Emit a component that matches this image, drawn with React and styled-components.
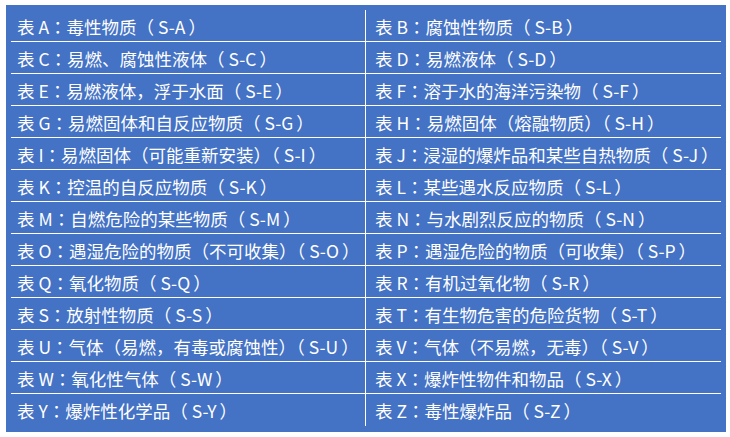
import React from "react";
import styled, { createGlobalStyle } from "styled-components";

const Global = createGlobalStyle`
  html, body { margin: 0; padding: 0; background: #ffffff; }
  body { font-family: "Noto Sans CJK SC", "Noto Sans", sans-serif; }
`;

const Panel = styled.div`
  margin: 5px 0 0 6px;
  width: 720px;
  height: 427px;
  box-sizing: border-box;
  padding: 5px 5px 0 5px;
  background: #4472c4;
`;

const Table = styled.div`
  display: grid;
  grid-template-columns: 355px 355px;
`;

const Cell = styled.div`
  display: flex;
  align-items: center;
  box-sizing: border-box;
  height: 32px;
  padding: 2px 0 0 ${(p) => (p.$right ? "9px" : "6px")};
  border-bottom: ${(p) => (p.$last ? "none" : "1px solid #ffffff")};
  border-right: ${(p) => (p.$right ? "none" : "1px solid #ffffff")};
  color: #ffffff;
  font-family: "Noto Sans CJK SC", "Noto Sans", sans-serif;
  font-size: 17.5px;
  line-height: 1;
  white-space: nowrap;
`;

const Colon = styled.span`
  font-family: "Noto Sans CJK TC", "Noto Sans", sans-serif;
`;

const Code = styled.span`
  padding: 0 3px 0 4px;
`;

const rows = [
  ["A", "毒性物质", "B", "腐蚀性物质"],
  ["C", "易燃、腐蚀性液体", "D", "易燃液体"],
  ["E", "易燃液体，浮于水面", "F", "溶于水的海洋污染物"],
  ["G", "易燃固体和自反应物质", "H", "易燃固体（熔融物质）"],
  ["I", "易燃固体（可能重新安装）", "J", "浸湿的爆炸品和某些自热物质"],
  ["K", "控温的自反应物质", "L", "某些遇水反应物质"],
  ["M", "自燃危险的某些物质", "N", "与水剧烈反应的物质"],
  ["O", "遇湿危险的物质（不可收集）", "P", "遇湿危险的物质（可收集）"],
  ["Q", "氧化物质", "R", "有机过氧化物"],
  ["S", "放射性物质", "T", "有生物危害的危险货物"],
  ["U", "气体（易燃，有毒或腐蚀性）", "V", "气体（不易燃，无毒）"],
  ["W", "氧化性气体", "X", "爆炸性物件和物品"],
  ["Y", "爆炸性化学品", "Z", "毒性爆炸品"],
];

function Entry({ code, name, right, last }) {
  return (
    <Cell $right={right} $last={last}>
      表 {code}
      <Colon>：</Colon>
      {name}（<Code>S-{code}</Code>）
    </Cell>
  );
}

export default function App() {
  return (
    <>
      <Global />
      <Panel>
        <Table>
          {rows.map((r, i) => (
            <React.Fragment key={r[0]}>
              <Entry code={r[0]} name={r[1]} last={i === rows.length - 1} />
              <Entry code={r[2]} name={r[3]} right last={i === rows.length - 1} />
            </React.Fragment>
          ))}
        </Table>
      </Panel>
    </>
  );
}
